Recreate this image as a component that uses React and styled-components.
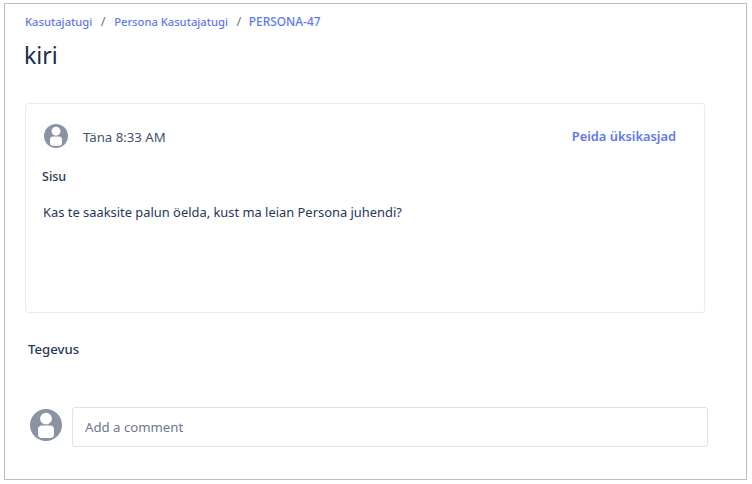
import React from 'react';
import styled, { createGlobalStyle } from 'styled-components';

const GlobalStyle = createGlobalStyle`
  html, body {
    margin: 0;
    padding: 0;
    background: #ffffff;
  }
  body {
    font-family: "Noto Sans", "Open Sans", sans-serif;
    color: #172b4d;
  }
`;

const Frame = styled.div`
  box-sizing: border-box;
  width: 743px;
  height: 477px;
  margin: 3px 0 0 4px;
  border: 1px solid #bdbdbd;
  padding: 9px 41px 0 20px;
`;

const Breadcrumbs = styled.nav`
  display: flex;
  align-items: center;
  height: 16px;
  font-weight: 500;
  color: #5e79ee;
`;

const Crumb = styled.span`
  font-size: ${(p) => (p.$caps ? '11.9px' : '11.2px')};
  margin-left: ${(p) => (p.$caps ? '-1px' : '0')};
`;

const Separator = styled.span`
  color: #6b778c;
  font-weight: 400;
  font-size: 13px;
  margin: 0 8.5px;
`;

const Title = styled.h1`
  margin: 10px 0 0 -1px;
  font-size: 23px;
  line-height: 32px;
  font-weight: 400;
  color: #172b4d;
`;

const Card = styled.section`
  box-sizing: border-box;
  height: 210px;
  margin-top: 32px;
  border: 1px solid #ebecf0;
  border-radius: 3px;
  padding: 20px 28px 0 16px;
`;

const CardHeader = styled.div`
  display: flex;
  align-items: center;
  height: 24px;
  padding-left: 2px;
`;

const Time = styled.span`
  margin: 1px 0 0 15px;
  font-size: 13.2px;
  color: #42526e;
`;

const HideLink = styled.a`
  margin-left: auto;
  font-size: 12.85px;
  font-weight: 600;
  color: #5e79ee;
`;

const FieldLabel = styled.div`
  margin-top: 20px;
  font-size: 12.5px;
  line-height: 18px;
  font-weight: 500;
  color: #253858;
`;

const Body = styled.p`
  margin: 17px 0 0 1px;
  font-size: 12.9px;
  line-height: 18px;
  color: #253858;
`;

const ActivityLabel = styled.h2`
  margin: 27px 0 0 3px;
  font-size: 13.2px;
  line-height: 18px;
  font-weight: 500;
  color: #253858;
`;

const CommentRow = styled.div`
  display: flex;
  align-items: flex-start;
  gap: 10px;
  margin: 49px -3px 0 5px;

  svg {
    margin-top: 2px;
  }
`;

const CommentBox = styled.div`
  box-sizing: border-box;
  flex: 1;
  height: 40px;
  display: flex;
  align-items: center;
  padding-left: 12px;
  border: 1px solid #dfe1e6;
  border-radius: 3px;
  font-size: 13.2px;
  color: #6b778c;
`;

const Avatar = ({ size }) => (
  <svg width={size} height={size} viewBox="0 0 32 32" aria-hidden="true">
    <circle cx="16" cy="16" r="16" fill="#8993a4" />
    <circle cx="16" cy="9.6" r="5.9" fill="#ffffff" />
    <rect x="8" y="16.6" width="16" height="12.4" rx="4" fill="#ffffff" />
  </svg>
);

const App = () => (
  <>
    <GlobalStyle />
    <Frame>
      <Breadcrumbs>
        <Crumb>Kasutajatugi</Crumb>
        <Separator>/</Separator>
        <Crumb>Persona Kasutajatugi</Crumb>
        <Separator>/</Separator>
        <Crumb $caps>PERSONA-47</Crumb>
      </Breadcrumbs>
      <Title>kiri</Title>
      <Card>
        <CardHeader>
          <Avatar size={24} />
          <Time>Täna 8:33 AM</Time>
          <HideLink>Peida üksikasjad</HideLink>
        </CardHeader>
        <FieldLabel>Sisu</FieldLabel>
        <Body>Kas te saaksite palun öelda, kust ma leian Persona juhendi?</Body>
      </Card>
      <ActivityLabel>Tegevus</ActivityLabel>
      <CommentRow>
        <Avatar size={32} />
        <CommentBox>Add a comment</CommentBox>
      </CommentRow>
    </Frame>
  </>
);

export default App;
